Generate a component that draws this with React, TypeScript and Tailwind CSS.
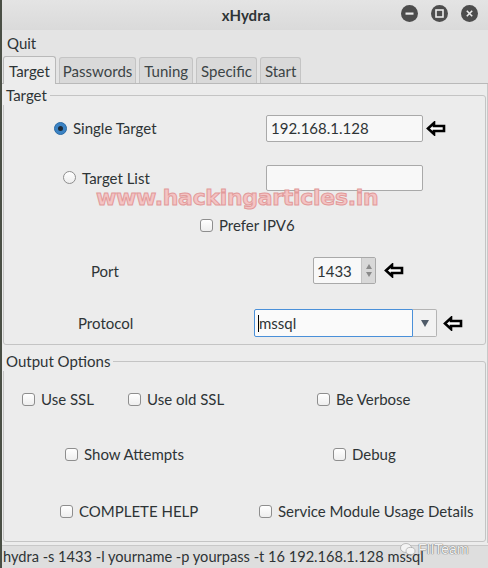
import React from "react";

const Arrow = () => (
  <svg width="20" height="15" viewBox="0 0 20 15" className="shrink-0">
    <path d="M2 7.5 L8 2 V5 H18 V10 H8 V13 Z" fill="white" stroke="black" strokeWidth="2.6" strokeLinejoin="miter" />
  </svg>
);

const Check = ({ label }: { label: string }) => (
  <div className="flex items-center">
    <div className="w-[13px] h-[13px] rounded-[3px] border border-[#8e8e8e] bg-gradient-to-b from-[#ffffff] to-[#eeeeee] shrink-0" />
    <span className="ml-[6px] whitespace-nowrap">{label}</span>
  </div>
);

const Radio = ({ on, label }: { on?: boolean; label: string }) => (
  <div className="flex items-center">
    {on ? (
      <div className="w-[13px] h-[13px] rounded-full bg-[#3b83c4] border border-[#2a6aa5] flex items-center justify-center shrink-0">
        <div className="w-[5px] h-[5px] rounded-full bg-[#1e2a36]" />
      </div>
    ) : (
      <div className="w-[13px] h-[13px] rounded-full border border-[#8e8e8e] bg-gradient-to-b from-[#ffffff] to-[#eeeeee] shrink-0" />
    )}
    <span className="ml-[6px] whitespace-nowrap">{label}</span>
  </div>
);

const TitleBtn = ({ kind }: { kind: "min" | "max" | "close" }) => (
  <div className="w-[17px] h-[17px] rounded-full bg-[#4d4d4d] flex items-center justify-center">
    <svg width="17" height="17" viewBox="0 0 17 17">
      {kind === "min" && <rect x="4.5" y="7.5" width="8" height="2.2" fill="#ececec" />}
      {kind === "max" && <rect x="5" y="5" width="7" height="7" fill="none" stroke="#ececec" strokeWidth="1.6" />}
      {kind === "close" && (
        <path d="M5.8 5.8 L11.2 11.2 M11.2 5.8 L5.8 11.2" stroke="#ececec" strokeWidth="1.6" />
      )}
    </svg>
  </div>
);

export default function App() {
  return (
    <div className="relative w-[488px] h-[568px] overflow-hidden flex flex-col bg-[#ececec] text-[15px] leading-[20px] text-[#2e3436] font-['Lato','Noto_Sans',sans-serif] border-l-2 border-[#4a4f45]">
      {/* Title bar */}
      <div className="h-[30px] shrink-0 bg-gradient-to-b from-[#e4e4e4] to-[#dadada] flex items-center relative">
        <div className="flex-1 text-center font-bold text-[15px] text-[#2e3436] pl-[2px]">xHydra</div>
        <div className="absolute right-[10px] top-[5px] flex gap-[13px]">
          <TitleBtn kind="min" />
          <TitleBtn kind="max" />
          <TitleBtn kind="close" />
        </div>
      </div>
      {/* Menu */}
      <div className="h-[25px] shrink-0 bg-[#e4e4e4] flex items-center pl-[5px]">Quit</div>
      {/* Tabs */}
      <div className="h-[29px] shrink-0 bg-[#e4e4e4] flex items-end pl-[1px] gap-[3px] border-b border-[#b9b9b9]">
        <div className="h-[28px] px-[5px] flex items-center bg-[#ececec] border border-b-0 border-[#b9b9b9] rounded-t-[3px] -mb-px relative z-10">Target</div>
        <div className="h-[26px] px-[3px] flex items-center bg-[#d9d9d9] border border-b-0 border-[#c4c4c4] rounded-t-[3px] text-[#3c4446]">Passwords</div>
        <div className="h-[26px] px-[4px] flex items-center bg-[#d9d9d9] border border-b-0 border-[#c4c4c4] rounded-t-[3px] text-[#3c4446]">Tuning</div>
        <div className="h-[26px] px-[4px] flex items-center bg-[#d9d9d9] border border-b-0 border-[#c4c4c4] rounded-t-[3px] text-[#3c4446]">Specific</div>
        <div className="h-[26px] px-[4px] flex items-center bg-[#d9d9d9] border border-b-0 border-[#c4c4c4] rounded-t-[3px] text-[#3c4446]">Start</div>
      </div>
      {/* Content */}
      <div className="flex-1 flex flex-col px-[1px] border-r border-[#c8c8c8]">
        <fieldset className="mt-[1px] border border-[#c4c4c4] rounded-[3px] h-[260px]">
          <legend className="px-[3px] -ml-px">Target</legend>
          <div className="flex items-center h-[28px] mt-[9px]">
            <div className="w-[262px] pl-[50px]">
              <Radio on label="Single Target" />
            </div>
            <div className="w-[157px] h-[27px] border border-[#a9a9a9] rounded-[2px] bg-[#f8f8f8] flex items-center pl-[4px]">192.168.1.128</div>
            <div className="ml-[3px]"><Arrow /></div>
          </div>
          <div className="flex items-center h-[27px] mt-[22px]">
            <div className="w-[262px] pl-[59px]">
              <Radio label="Target List" />
            </div>
            <div className="w-[157px] h-[26px] border border-[#a9a9a9] rounded-[2px] bg-[#f8f8f8]" />
          </div>
          <div className="flex items-center h-[20px] mt-[24px] pl-[196px]">
            <Check label="Prefer IPV6" />
          </div>
          <div className="flex items-center h-[27px] mt-[22px]">
            <div className="w-[309px] pl-[87px]">Port</div>
            <div className="w-[63px] h-[27px] border border-[#a9a9a9] rounded-[2px] bg-[#f8f8f8] flex items-center">
              <span className="flex-1 pl-[3px]">1433</span>
              <div className="w-[14px] h-[25px] bg-[#d8d8d8] border-l border-[#c4c4c4] flex flex-col items-center justify-center gap-[3px]">
                <svg width="6" height="5" viewBox="0 0 6 5"><path d="M3 0 L6 5 H0 Z" fill="#8a8a8a" /></svg>
                <svg width="6" height="5" viewBox="0 0 6 5"><path d="M0 0 H6 L3 5 Z" fill="#8a8a8a" /></svg>
              </div>
            </div>
            <div className="ml-[8px]"><Arrow /></div>
          </div>
          <div className="flex items-center h-[28px] mt-[25px]">
            <div className="w-[250px] pl-[74px]">Protocol</div>
            <div className="w-[159px] h-[28px] border border-[#4a90d9] rounded-l-[2px] bg-[#fafafa] flex items-center pl-[3px]">
              <div className="w-px h-[17px] bg-black" />
              <span>mssql</span>
            </div>
            <div className="w-[24px] h-[28px] border border-l-0 border-[#b4b4b4] rounded-r-[2px] bg-[#f2f2f2] flex items-center justify-center">
              <svg width="8" height="7" viewBox="0 0 8 7"><path d="M0 0 H8 L4 7 Z" fill="#4f5b68" /></svg>
            </div>
            <div className="ml-[6px]"><Arrow /></div>
          </div>
        </fieldset>
        <fieldset className="mt-[6px] border border-[#c4c4c4] rounded-[3px] h-[191px]">
          <legend className="px-[3px] -ml-px">Output Options</legend>
          <div className="flex items-center h-[22px] mt-[17px] pl-[18px]">
            <div className="w-[106px]"><Check label="Use SSL" /></div>
            <div className="w-[189px]"><Check label="Use old SSL" /></div>
            <Check label="Be Verbose" />
          </div>
          <div className="flex items-center h-[22px] mt-[33px] pl-[61px]">
            <div className="w-[268px]"><Check label="Show Attempts" /></div>
            <Check label="Debug" />
          </div>
          <div className="flex items-center h-[22px] mt-[35px] pl-[56px]">
            <div className="w-[199px]"><Check label="COMPLETE HELP" /></div>
            <Check label="Service Module Usage Details" />
          </div>
        </fieldset>
      </div>
      {/* Status bar */}
      <div className="h-[23px] shrink-0 mt-[2px] bg-[#dedede] border-t border-[#c8c8c8] flex items-center pl-[1px] whitespace-nowrap text-[14.6px]">
        hydra -s 1433 -l yourname -p yourpass -t 16 192.168.1.128 mssql
      </div>

      {/* Watermarks */}
      <div className="absolute left-[94px] top-[184px] text-[22px] leading-[28px] font-bold font-['DejaVu_Sans',sans-serif] text-[#f4c4c4] [-webkit-text-stroke:1px_#e29a9a] tracking-[-0.3px] pointer-events-none">
        www.hackingarticles.in
      </div>
      <div className="absolute left-[398px] top-[541px] flex items-center gap-[2px] pointer-events-none">
        <svg width="16" height="14" viewBox="0 0 16 14">
          <ellipse cx="6" cy="6" rx="5.5" ry="4.5" fill="#f4f4f4" stroke="#9a9a9a" strokeWidth="0.6" />
          <ellipse cx="10.5" cy="9" rx="4.5" ry="3.6" fill="#f4f4f4" stroke="#9a9a9a" strokeWidth="0.6" />
        </svg>
        <span className="text-[14px] leading-[16px] text-[#f2f2f2] [text-shadow:0_0_1px_#666,0_0_1px_#666] font-['Liberation_Sans',sans-serif]">FIITeam</span>
      </div>
    </div>
  );
}
